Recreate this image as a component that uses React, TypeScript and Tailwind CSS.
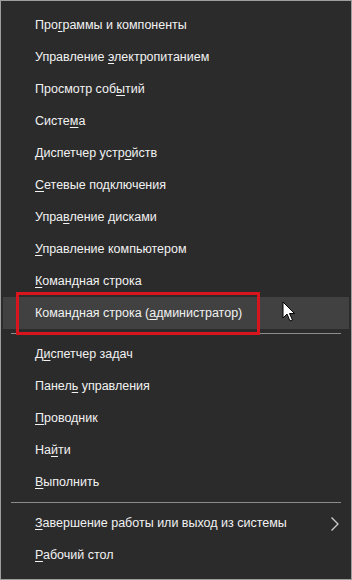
import React from 'react';

type Item = { pre: string; key: string; post: string; active?: boolean; arrow?: boolean };

const groupA: Item[] = [
  { pre: 'Про', key: 'г', post: 'раммы и компоненты' },
  { pre: 'Управление ', key: 'э', post: 'лектропитанием' },
  { pre: 'Просмотр соб', key: 'ы', post: 'тий' },
  { pre: 'Систе', key: 'м', post: 'а' },
  { pre: 'Диспетчер устр', key: 'о', post: 'йств' },
  { pre: '', key: 'С', post: 'етевые подключения' },
  { pre: 'Упра', key: 'в', post: 'ление дисками' },
  { pre: '', key: 'У', post: 'правление компьютером' },
  { pre: '', key: 'К', post: 'омандная строка' },
  { pre: 'Командная строка (', key: 'а', post: 'дминистратор)', active: true },
];

const groupB: Item[] = [
  { pre: 'Д', key: 'и', post: 'спетчер задач' },
  { pre: 'Панел', key: 'ь', post: ' управления' },
  { pre: '', key: 'П', post: 'роводник' },
  { pre: 'На', key: 'й', post: 'ти' },
  { pre: '', key: 'В', post: 'ыполнить' },
];

const groupC: Item[] = [
  { pre: '', key: 'З', post: 'авершение работы или выход из системы', arrow: true },
  { pre: '', key: 'Р', post: 'абочий стол' },
];

const Row = ({ item }: { item: Item }) => (
  <div
    className={`relative flex items-center h-8 pl-8 pr-3 ${item.active ? 'bg-[#414141]' : ''}`}
  >
    <span className="text-[12.5px] text-[#f2f2f2] whitespace-pre">
      {item.pre}
      <span className="underline underline-offset-2">{item.key}</span>
      {item.post}
    </span>
    {item.arrow && (
      <svg className="absolute right-[9px] top-[9px]" width="10" height="16" viewBox="0 0 10 16">
        <path d="M1.5 1.5 L8 8 L1.5 14.5" fill="none" stroke="#cfcfcf" strokeWidth="1.3" />
      </svg>
    )}
  </div>
);

const Separator = () => (
  <div className="h-[9px] flex items-center px-[8px]">
    <div className="h-px w-full bg-[#8c8c8c]" />
  </div>
);

export default function App() {
  return (
    <div
      className="relative w-[352px] h-[580px] border border-[#9e9e9e] bg-[#2b2b2b] pt-[8px] px-[2px] overflow-hidden"
      style={{ fontFamily: '"Liberation Sans", Arial, sans-serif' }}
    >
      {groupA.map((it, i) => (
        <Row key={'a' + i} item={it} />
      ))}
      <Separator />
      {groupB.map((it, i) => (
        <Row key={'b' + i} item={it} />
      ))}
      <Separator />
      {groupC.map((it, i) => (
        <Row key={'c' + i} item={it} />
      ))}

      {/* red highlight frame */}
      <div className="absolute left-[15px] top-[291px] w-[244px] h-[43px] border-[3px] border-[#d8141c]" />

      {/* mouse pointer */}
      <svg className="absolute left-[281px] top-[300px]" width="14" height="22" viewBox="0 0 14 22">
        <path
          d="M1 1 L1 17 L5 13 L8 20 L10.5 19 L7.5 12.5 L12.5 12.5 Z"
          fill="#ffffff"
          stroke="#000000"
          strokeWidth="1"
          strokeLinejoin="round"
        />
      </svg>
    </div>
  );
}
